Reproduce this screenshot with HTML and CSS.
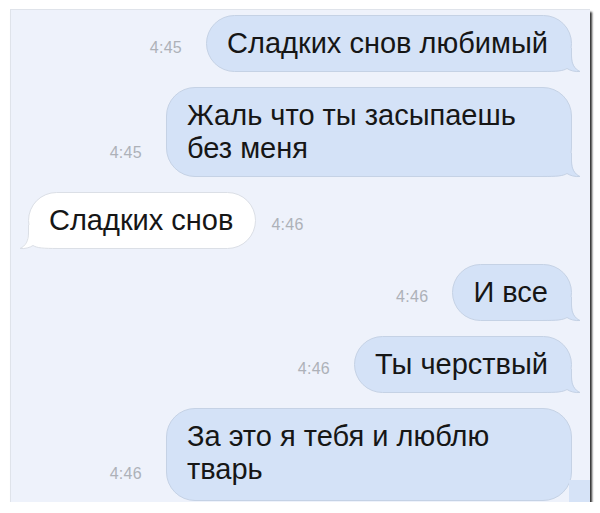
FILE: index.html
```html
<!DOCTYPE html>
<html lang="ru">
<head>
<meta charset="utf-8">
<title>Сообщения</title>
<link rel="stylesheet" href="styles.css">
</head>
<body>
<div class="panel">
  <div class="row out">
    <span class="time">4:45</span>
    <div class="bubble blue">Сладких снов любимый<svg class="tail" width="40" height="24" viewBox="0 0 40 24"><path class="tail-fill" d="M0 0 L30 0 L30 8 C30 16 33 21 38 23.5 C33 24 28 22.5 25 20.5 C21 23 15 24 0 24 Z"/><path class="tail-line" d="M29.5 0 L29.5 8 C29.5 16 32.5 21 38 23.5 C33 24 28 22.5 25 20.5 C21 23 15 23.5 0 23.5"/></svg></div>
  </div>
  <div class="row out">
    <span class="time">4:45</span>
    <div class="bubble blue wide">Жаль что ты засыпаешь без меня<svg class="tail" width="40" height="24" viewBox="0 0 40 24"><path class="tail-fill" d="M0 0 L30 0 L30 8 C30 16 33 21 38 23.5 C33 24 28 22.5 25 20.5 C21 23 15 24 0 24 Z"/><path class="tail-line" d="M29.5 0 L29.5 8 C29.5 16 32.5 21 38 23.5 C33 24 28 22.5 25 20.5 C21 23 15 23.5 0 23.5"/></svg></div>
  </div>
  <div class="row in">
    <div class="bubble white">Сладких снов<svg class="tail" width="40" height="24" viewBox="0 0 40 24"><path class="tail-fill" d="M0 0 L30 0 L30 8 C30 16 33 21 38 23.5 C33 24 28 22.5 25 20.5 C21 23 15 24 0 24 Z"/><path class="tail-line" d="M29.5 0 L29.5 8 C29.5 16 32.5 21 38 23.5 C33 24 28 22.5 25 20.5 C21 23 15 23.5 0 23.5"/></svg></div>
    <span class="time">4:46</span>
  </div>
  <div class="row out">
    <span class="time">4:46</span>
    <div class="bubble blue">И все<svg class="tail" width="40" height="24" viewBox="0 0 40 24"><path class="tail-fill" d="M0 0 L30 0 L30 8 C30 16 33 21 38 23.5 C33 24 28 22.5 25 20.5 C21 23 15 24 0 24 Z"/><path class="tail-line" d="M29.5 0 L29.5 8 C29.5 16 32.5 21 38 23.5 C33 24 28 22.5 25 20.5 C21 23 15 23.5 0 23.5"/></svg></div>
  </div>
  <div class="row out">
    <span class="time">4:46</span>
    <div class="bubble blue">Ты черствый<svg class="tail" width="40" height="24" viewBox="0 0 40 24"><path class="tail-fill" d="M0 0 L30 0 L30 8 C30 16 33 21 38 23.5 C33 24 28 22.5 25 20.5 C21 23 15 24 0 24 Z"/><path class="tail-line" d="M29.5 0 L29.5 8 C29.5 16 32.5 21 38 23.5 C33 24 28 22.5 25 20.5 C21 23 15 23.5 0 23.5"/></svg></div>
  </div>
  <div class="row out">
    <span class="time">4:46</span>
    <div class="bubble blue wide last">За это я тебя и люблю тварь<span class="cut"></span></div>
  </div>
</div>
</body>
</html>
```
FILE: styles.css
```css
html, body {
  margin: 0;
  padding: 0;
  background: #ffffff;
}

body {
  font-family: "Liberation Sans", Arial, sans-serif;
}

.panel {
  box-sizing: border-box;
  margin: 9px 0 0 10px;
  width: 580px;
  height: 493px;
  background: #eef2fb;
  border-top: 1px solid #dfe3ea;
  border-left: 1px solid #dfe3ea;
  box-shadow: 2px 3px 2px rgba(25, 25, 25, 0.9);
  padding: 5px 18px 0 17px;
  display: flex;
  flex-direction: column;
  gap: 15px;
  overflow: hidden;
}

.row {
  display: flex;
  align-items: last baseline;
}

.row.out {
  justify-content: flex-end;
  gap: 24px;
}

.row.in {
  justify-content: flex-start;
  gap: 15px;
}

.time {
  font-size: 16px;
  color: #adb1b8;
  letter-spacing: 0.3px;
}

.bubble {
  position: relative;
  z-index: 0;
  font-size: 29px;
  line-height: 33px;
  color: #161616;
  padding: 11px 23px 11px 20px;
  border-radius: 29px;
}

.bubble.wide {
  box-sizing: border-box;
  width: 406px;
  padding-right: 20px;
}

.blue {
  background: #d4e2f7;
  border: 1px solid #c5d2e5;
}

.white {
  background: #ffffff;
  border: 1px solid #dbdfe6;
  padding-right: 22px;
}

.tail {
  position: absolute;
  z-index: -1;
  right: -11px;
  bottom: -1px;
  overflow: visible;
}

.white .tail {
  right: auto;
  left: -11px;
  transform: scaleX(-1);
}

.tail-line {
  fill: none;
  stroke-width: 1;
}

.blue .tail-fill { fill: #d4e2f7; }
.blue .tail-line { stroke: #c5d2e5; }
.white .tail-fill { fill: #ffffff; }
.white .tail-line { stroke: #dbdfe6; }

.last {
  padding-bottom: 14px;
}

.cut {
  position: absolute;
  z-index: -1;
  right: -20px;
  bottom: -10px;
  width: 22px;
  height: 30px;
  background: #d6e3f7;
}
```
